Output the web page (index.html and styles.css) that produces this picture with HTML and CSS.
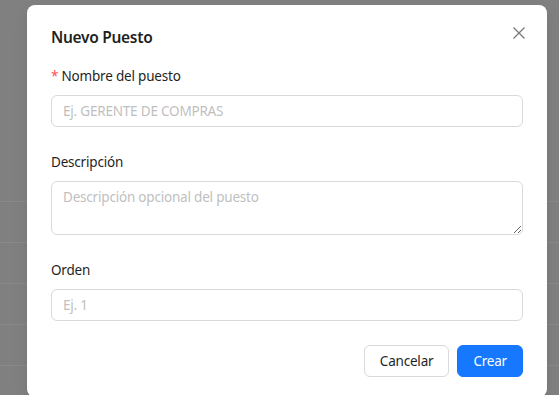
FILE: index.html
```html
<!DOCTYPE html>
<html lang="es">

<head>
    <meta charset="UTF-8">
    <meta name="viewport" content="width=device-width, initial-scale=1.0">
    <title>Nuevo Puesto</title>
    <link rel="stylesheet" href="styles.css">
</head>

<body>
    <div class="page">
        <div class="row"></div>
        <div class="row"></div>
        <div class="row"></div>
        <div class="row"></div>
        <div class="row"></div>
    </div>

    <div class="modal">
        <button class="modal-close" aria-label="Cerrar">
            <svg width="12" height="12" viewBox="0 0 12 12">
                <path d="M0.5 0.5 L11.5 11.5 M11.5 0.5 L0.5 11.5" stroke="#7a7a7a" stroke-width="1.3" fill="none" />
            </svg>
        </button>
        <div class="modal-title">Nuevo Puesto</div>

        <form class="form">
            <div class="form-item">
                <label class="form-label"><span class="required">*</span> Nombre del puesto</label>
                <input class="input" type="text" placeholder="Ej. GERENTE DE COMPRAS">
            </div>
            <div class="form-item">
                <label class="form-label">Descripción</label>
                <textarea class="input textarea" rows="2" placeholder="Descripción opcional del puesto"></textarea>
            </div>
            <div class="form-item">
                <label class="form-label">Orden</label>
                <input class="input" type="text" placeholder="Ej. 1">
            </div>
        </form>

        <div class="modal-footer">
            <button class="btn">Cancelar</button>
            <button class="btn btn-primary">Crear</button>
        </div>
    </div>
</body>

</html>
```

FILE: styles.css
```css
body {
    font-family: 'Noto Sans', 'Open Sans', sans-serif;
    margin: 0;
    padding: 0;
    background-color: #808080;
    height: 395px;
    overflow: hidden;
    color: #1f1f1f;
    font-size: 13.5px;
    letter-spacing: -0.2px;
}

.page {
    padding-top: 201px;
}

.row {
    height: 40px;
    border-top: 1px solid #8a8a8a;
}

.modal {
    position: absolute;
    top: 5px;
    left: 27px;
    width: 472px;
    padding: 20px 24px;
    background-color: #ffffff;
    border-radius: 8px;
    box-shadow: 0 6px 16px rgba(0, 0, 0, 0.08), 0 3px 6px -4px rgba(0, 0, 0, 0.12);
}

.modal-close {
    position: absolute;
    top: 17px;
    right: 17px;
    width: 22px;
    height: 22px;
    padding: 0;
    border: none;
    background: transparent;
    display: flex;
    align-items: center;
    justify-content: center;
    cursor: pointer;
}

.modal-title {
    font-size: 15.5px;
    font-weight: 600;
    line-height: 24px;
    margin-bottom: 16px;
    letter-spacing: -0.3px;
}

.form-item {
    margin-bottom: 24px;
}

.form-label {
    display: block;
    height: 22px;
    line-height: 22px;
    padding-bottom: 8px;
}

.required {
    color: #ff4d4f;
}

.input {
    display: block;
    box-sizing: border-box;
    width: 100%;
    height: 32px;
    padding: 4px 11px;
    font-family: inherit;
    font-size: 13.5px;
    letter-spacing: -0.2px;
    line-height: 22px;
    color: #1f1f1f;
    border: 1px solid #d9d9d9;
    border-radius: 6px;
    outline: none;
}

.input::placeholder {
    color: #bfbfbf;
}

.textarea {
    height: 54px;
    resize: vertical;
}

.modal-footer {
    display: flex;
    justify-content: flex-end;
    gap: 8px;
}

.btn {
    height: 32px;
    padding: 4px 15px;
    font-family: inherit;
    font-size: 13.5px;
    letter-spacing: -0.2px;
    color: #1f1f1f;
    background-color: #ffffff;
    border: 1px solid #d9d9d9;
    border-radius: 6px;
    cursor: pointer;
}

.btn-primary {
    color: #ffffff;
    background-color: #1677ff;
    border-color: #1677ff;
}
```
